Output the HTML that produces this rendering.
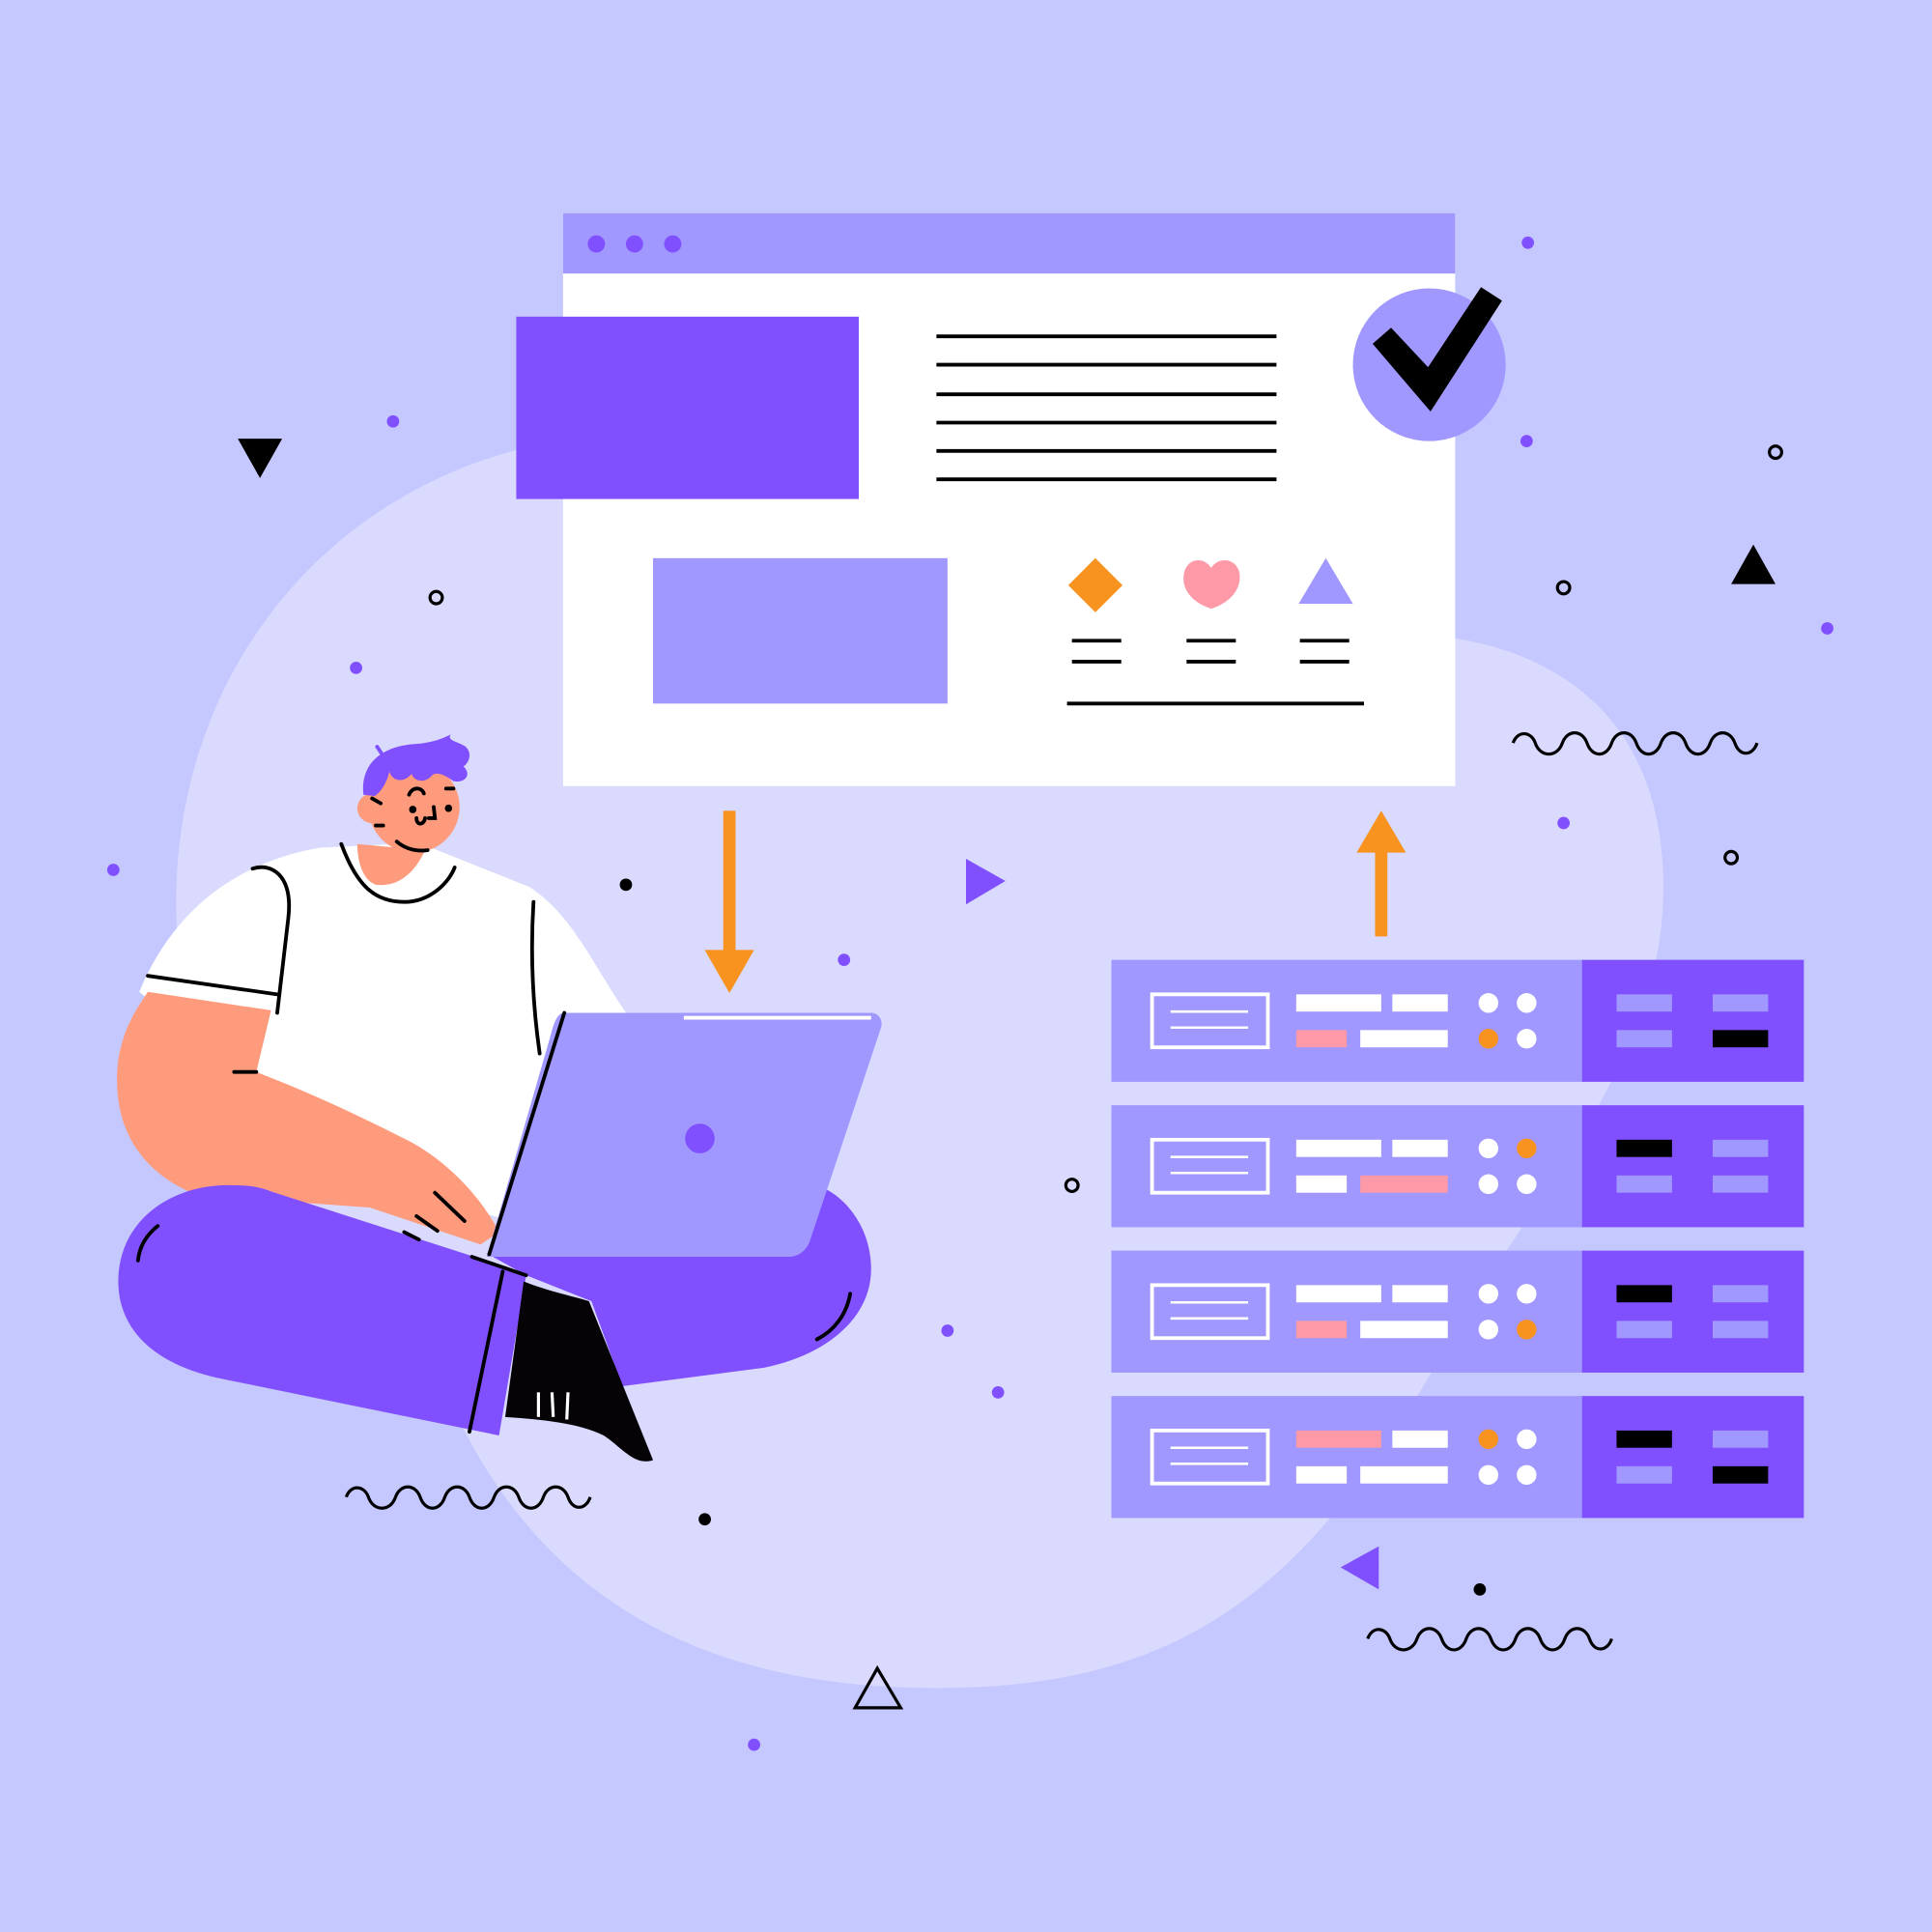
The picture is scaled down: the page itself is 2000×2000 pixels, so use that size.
<!DOCTYPE html>
<html><head><meta charset="utf-8"><style>html,body{margin:0;padding:0;background:#c5c8fe}svg{display:block}</style></head>
<body>
<svg width="2000" height="2000" viewBox="0 0 1568 1568" xmlns="http://www.w3.org/2000/svg">
<rect width="1568" height="1568" fill="#c5c8fe"/>
<path d="M420 365 C250 410 140 560 143 740 C146 900 280 1000 350 1100 C420 1290 560 1370 760 1370 C960 1370 1060 1290 1170 1100 C1250 960 1350 860 1350 720 C1350 580 1260 530 1180 518 L1180 360 Z" fill="#d9dafd"/>
<rect x="457" y="173" width="724" height="465" fill="#fff"/>
<rect x="457" y="173" width="724" height="49" fill="#a098fe"/>
<circle cx="484" cy="198" r="7" fill="#8150fe"/><circle cx="515" cy="198" r="7" fill="#8150fe"/><circle cx="546" cy="198" r="7" fill="#8150fe"/>
<rect x="419" y="257" width="278" height="148" fill="#8150fe"/>
<g stroke="#000" stroke-width="3"><line x1="760" y1="273" x2="1036" y2="273"/><line x1="760" y1="296" x2="1036" y2="296"/><line x1="760" y1="320" x2="1036" y2="320"/><line x1="760" y1="343" x2="1036" y2="343"/><line x1="760" y1="366" x2="1036" y2="366"/><line x1="760" y1="389" x2="1036" y2="389"/>
<line x1="870" y1="520" x2="910" y2="520"/><line x1="870" y1="537" x2="910" y2="537"/><line x1="963" y1="520" x2="1003" y2="520"/><line x1="963" y1="537" x2="1003" y2="537"/><line x1="1055" y1="520" x2="1095" y2="520"/><line x1="1055" y1="537" x2="1095" y2="537"/><line x1="866" y1="571" x2="1107" y2="571"/></g>
<rect x="530" y="453" width="239" height="118" fill="#a098fe"/>
<circle cx="1160" cy="296" r="62" fill="#a098fe"/>
<polygon points="1114,279 1129,266 1159,298 1202,233 1219,244 1161,334" fill="#000"/>
<polygon points="889,453 911,475 889,497 867,475" fill="#f7931e"/>
<path d="M983 494 C970 490 958 480 961 465 C964 452 978 452 983 461 C988 452 1003 452 1006 465 C1008 480 996 490 983 494Z" fill="#fe9aa8"/>
<polygon points="1076,453 1098,490 1054,490" fill="#a098fe"/>
<rect x="587" y="658" width="10" height="115" fill="#f7931e"/><polygon points="572,771 612,771 592,806" fill="#f7931e"/>
<rect x="1116" y="690" width="10" height="70" fill="#f7931e"/><polygon points="1101,692 1141,692 1121,658" fill="#f7931e"/>
<g id="s">
<rect x="902" y="779" width="383" height="99" fill="#a098fe"/><rect x="1284" y="779" width="180" height="99" fill="#8150fe"/>
<rect x="935" y="807" width="94" height="43" fill="none" stroke="#fff" stroke-width="3"/>
<line x1="950" y1="821" x2="1013" y2="821" stroke="#fff" stroke-width="2"/><line x1="950" y1="834" x2="1013" y2="834" stroke="#fff" stroke-width="2"/>
</g>
<use href="#s" y="118"/><use href="#s" y="236"/><use href="#s" y="354"/>
<g>
<rect x="1052" y="807" width="69" height="14" fill="#fff"/><rect x="1130" y="807" width="45" height="14" fill="#fff"/><rect x="1052" y="836" width="41" height="14" fill="#fe9aa8"/><rect x="1104" y="836" width="71" height="14" fill="#fff"/>
<circle cx="1208" cy="814" r="8" fill="#fff"/><circle cx="1239" cy="814" r="8" fill="#fff"/><circle cx="1208" cy="843" r="8" fill="#f7931e"/><circle cx="1239" cy="843" r="8" fill="#fff"/>
<rect x="1312" y="807" width="45" height="14" fill="#a098fe"/><rect x="1390" y="807" width="45" height="14" fill="#a098fe"/><rect x="1312" y="836" width="45" height="14" fill="#a098fe"/><rect x="1390" y="836" width="45" height="14" fill="#000"/>
<rect x="1052" y="925" width="69" height="14" fill="#fff"/><rect x="1130" y="925" width="45" height="14" fill="#fff"/><rect x="1052" y="954" width="41" height="14" fill="#fff"/><rect x="1104" y="954" width="71" height="14" fill="#fe9aa8"/>
<circle cx="1208" cy="932" r="8" fill="#fff"/><circle cx="1239" cy="932" r="8" fill="#f7931e"/><circle cx="1208" cy="961" r="8" fill="#fff"/><circle cx="1239" cy="961" r="8" fill="#fff"/>
<rect x="1312" y="925" width="45" height="14" fill="#000"/><rect x="1390" y="925" width="45" height="14" fill="#a098fe"/><rect x="1312" y="954" width="45" height="14" fill="#a098fe"/><rect x="1390" y="954" width="45" height="14" fill="#a098fe"/>
<rect x="1052" y="1043" width="69" height="14" fill="#fff"/><rect x="1130" y="1043" width="45" height="14" fill="#fff"/><rect x="1052" y="1072" width="41" height="14" fill="#fe9aa8"/><rect x="1104" y="1072" width="71" height="14" fill="#fff"/>
<circle cx="1208" cy="1050" r="8" fill="#fff"/><circle cx="1239" cy="1050" r="8" fill="#fff"/><circle cx="1208" cy="1079" r="8" fill="#fff"/><circle cx="1239" cy="1079" r="8" fill="#f7931e"/>
<rect x="1312" y="1043" width="45" height="14" fill="#000"/><rect x="1390" y="1043" width="45" height="14" fill="#a098fe"/><rect x="1312" y="1072" width="45" height="14" fill="#a098fe"/><rect x="1390" y="1072" width="45" height="14" fill="#a098fe"/>
<rect x="1052" y="1161" width="69" height="14" fill="#fe9aa8"/><rect x="1130" y="1161" width="45" height="14" fill="#fff"/><rect x="1052" y="1190" width="41" height="14" fill="#fff"/><rect x="1104" y="1190" width="71" height="14" fill="#fff"/>
<circle cx="1208" cy="1168" r="8" fill="#f7931e"/><circle cx="1239" cy="1168" r="8" fill="#fff"/><circle cx="1208" cy="1197" r="8" fill="#fff"/><circle cx="1239" cy="1197" r="8" fill="#fff"/>
<rect x="1312" y="1161" width="45" height="14" fill="#000"/><rect x="1390" y="1161" width="45" height="14" fill="#a098fe"/><rect x="1312" y="1190" width="45" height="14" fill="#a098fe"/><rect x="1390" y="1190" width="45" height="14" fill="#000"/>
</g>
<!-- person -->
<path d="M113 805 C140 740 190 700 260 688 L340 684 L430 720 C460 740 475 770 500 810 L520 840 L450 1000 L300 960 Z" fill="#fff"/>
<path d="M120 805 L220 820 L208 870 C260 890 300 910 330 925 C360 940 390 970 405 1000 L390 1010 C360 1000 330 990 300 980 L160 970 C110 950 90 910 96 860 C100 835 110 820 120 805Z" fill="#fe9b7c"/>
<path d="M290 685 L345 690 C335 712 320 720 305 718 C295 715 290 700 290 685Z" fill="#fe9b7c"/>
<circle cx="336" cy="655" r="37" fill="#fe9b7c"/>
<circle cx="302" cy="656" r="12" fill="#fe9b7c"/>
<path d="M295 645 C292 620 310 606 335 604 C350 603 358 600 366 596 C362 601 372 602 378 606 C384 612 380 620 376 622 C383 628 378 636 368 634 C360 628 353 626 350 630 C344 636 336 634 334 628 C328 636 318 634 316 626 C314 636 308 644 304 646 Z" fill="#8150fe"/>
<path d="M306 606 L310 612" stroke="#8150fe" stroke-width="3" stroke-linecap="round"/>
<!-- legs -->
<path d="M427 1035 L480 1056 L505 1125 L620 1110 C670 1100 707 1070 707 1030 C707 1000 690 975 670 965 L640 1020 L400 1020 Z" fill="#8150fe"/>
<path d="M405 1165 L185 1120 C120 1108 96 1075 96 1040 C96 990 140 960 190 962 C205 962 212 964 220 967 L385 1020 L427 1035 Z" fill="#8150fe"/>
<path d="M425 1040 C445 1048 465 1052 478 1056 L530 1185 C515 1190 505 1175 490 1165 C470 1155 440 1152 410 1150 Z" fill="#060307"/>
<path d="M458 822 L707 822 C713 822 717 828 715 834 L657 1008 C654 1015 648 1020 640 1020 L395 1020 L447 840 C450 828 453 822 458 822Z" fill="#a098fe"/>
<circle cx="568" cy="924" r="12" fill="#8150fe"/>
<line x1="555" y1="826" x2="707" y2="826" stroke="#fff" stroke-width="3"/>
<g fill="none" stroke="#000" stroke-width="3" stroke-linecap="round">
<path d="M277 685 C290 720 305 732 328 732 C350 732 365 715 369 704"/>
<path d="M205 705 C220 700 238 710 234 745 L225 822"/>
<path d="M120 792 L225 807"/>
<path d="M433 732 C430 780 433 820 438 855"/>
<path d="M458 822 L397 1018"/>
<path d="M383 1020 L427 1035"/>
<path d="M408 1032 L381 1162"/>
<path d="M190 870 L208 870"/>
<path d="M353 968 L377 991 M338 987 L355 999 M328 1000 L340 1006"/>
<path d="M128 995 C118 1003 113 1013 112 1023"/>
<path d="M690 1050 C687 1067 677 1080 663 1087"/>
<path d="M322 683 C330 690 340 691 347 690"/>
<path d="M302 648 L309 652 M305 670 L311 670 M362 640 L368 640 M332 645 C334 639 342 638 344 644 M338 664 C338 670 344 670 345 664 M352 655 L353 664 L348 664"/>
</g>
<circle cx="335" cy="657" r="3"/><circle cx="364" cy="656" r="3"/>
<g stroke="#fff" stroke-width="2.5"><line x1="437" y1="1130" x2="437" y2="1150"/><line x1="448" y1="1130" x2="449" y2="1150"/><line x1="461" y1="1130" x2="460" y2="1152"/></g>
<g fill="#8150fe"><circle cx="1240" cy="197" r="5"/><circle cx="319" cy="342" r="5"/><circle cx="1239" cy="358" r="5"/><circle cx="289" cy="542" r="5"/><circle cx="1483" cy="510" r="5"/><circle cx="1269" cy="668" r="5"/><circle cx="92" cy="706" r="5"/><circle cx="685" cy="779" r="5"/><circle cx="769" cy="1080" r="5"/><circle cx="810" cy="1130" r="5"/><circle cx="612" cy="1416" r="5"/>
<polygon points="784,697 816,715 784,734"/><polygon points="1119,1255 1119,1290 1088,1272"/></g>
<g fill="#000"><circle cx="508" cy="718" r="5"/><circle cx="572" cy="1233" r="5"/><circle cx="1201" cy="1290" r="5"/>
<polygon points="193,356 229,356 211,388"/><polygon points="1423,442 1441,474 1405,474"/></g>
<g fill="none" stroke="#000" stroke-width="2.5"><circle cx="354" cy="485" r="5"/><circle cx="1441" cy="367" r="5"/><circle cx="1269" cy="477" r="5"/><circle cx="1405" cy="696" r="5"/><circle cx="870" cy="962" r="5"/>
<polygon points="712,1354 731,1386 694,1386"/>
<path d="M1228 603 C1232 592 1243 594 1246 603 C1250 615 1264 615 1268 603 C1272 592 1284 592 1288 603 C1292 615 1304 615 1308 603 C1312 592 1324 592 1328 603 C1332 615 1344 615 1348 603 C1352 592 1364 592 1368 603 C1372 615 1384 615 1388 603 C1392 592 1404 592 1408 603 C1412 615 1423 613 1426 603"/>
<path d="M281 1215 C285 1204 296 1206 299 1215 C303 1227 317 1227 321 1215 C325 1204 337 1204 341 1215 C345 1227 357 1227 361 1215 C365 1204 377 1204 381 1215 C385 1227 397 1227 401 1215 C405 1204 417 1204 421 1215 C425 1227 437 1227 441 1215 C445 1204 457 1204 461 1215 C465 1227 476 1225 479 1215"/>
<path d="M1110 1330 C1114 1319 1125 1321 1128 1330 C1132 1342 1146 1342 1150 1330 C1154 1319 1166 1319 1170 1330 C1174 1342 1186 1342 1190 1330 C1194 1319 1206 1319 1210 1330 C1214 1342 1226 1342 1230 1330 C1234 1319 1246 1319 1250 1330 C1254 1342 1266 1342 1270 1330 C1274 1319 1286 1319 1290 1330 C1294 1342 1305 1340 1308 1330"/>
</g>
</svg>
</body></html>
